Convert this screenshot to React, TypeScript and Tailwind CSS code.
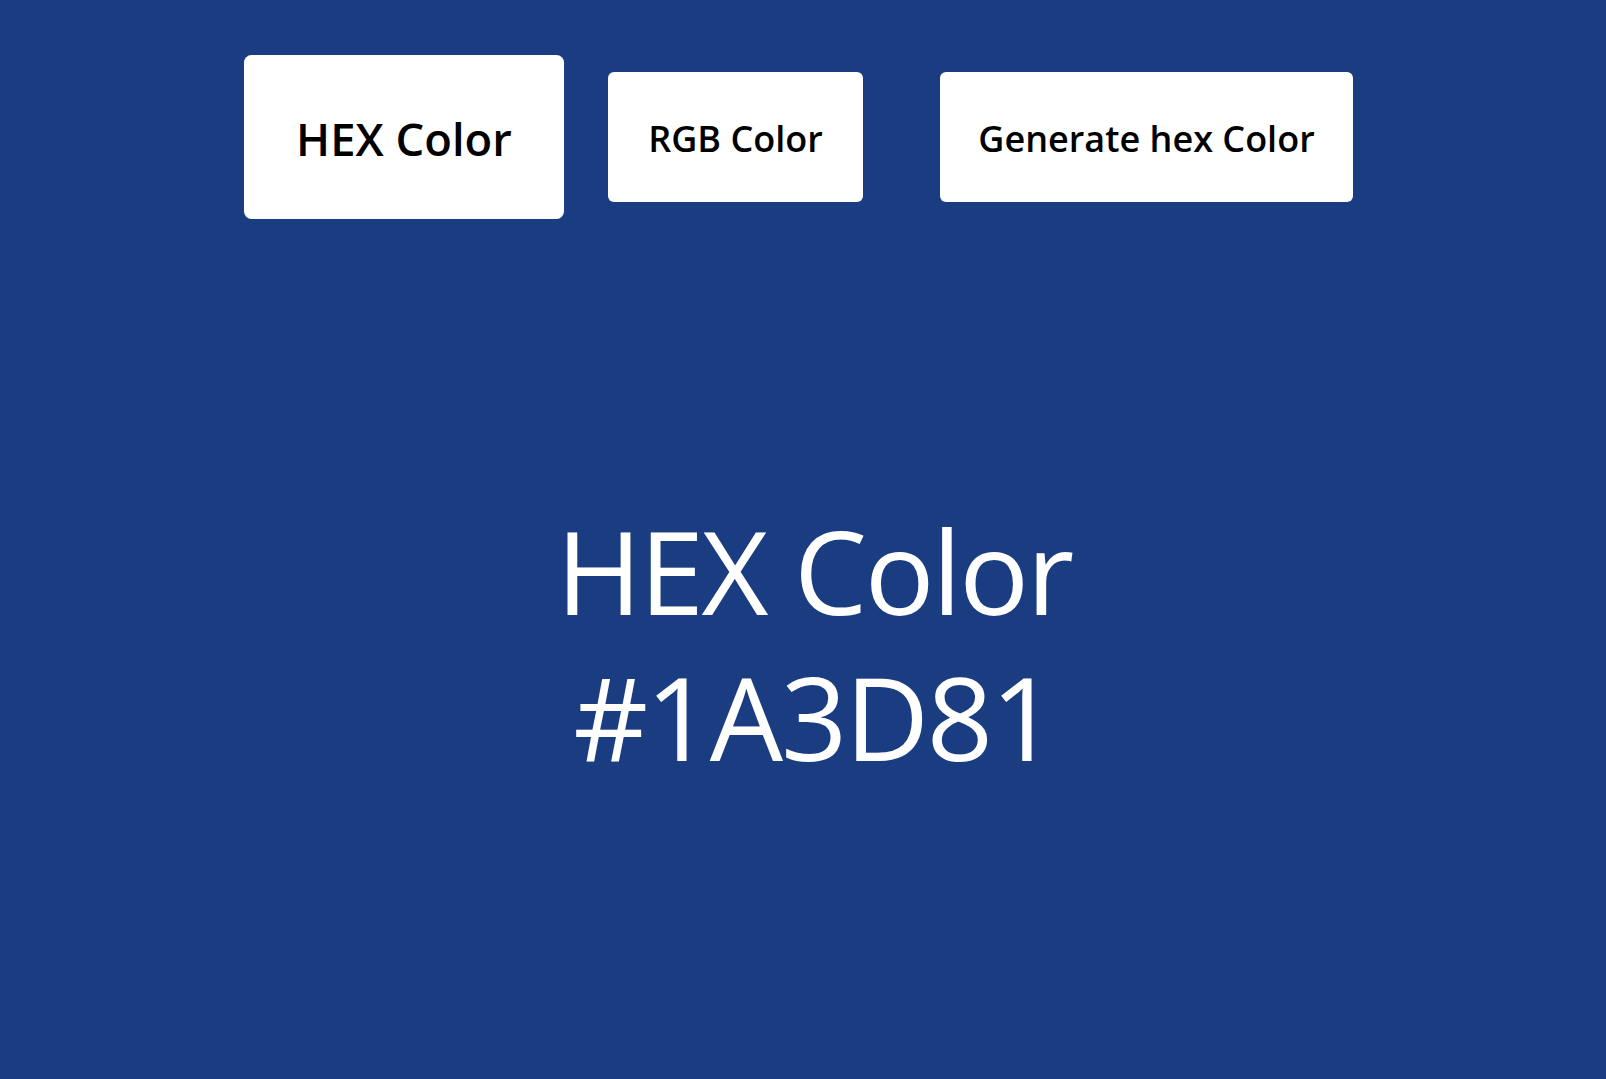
const buttons = [
  { label: "HEX Color", width: "w-[254px]", active: true },
  { label: "RGB Color", width: "w-[255px]", active: false },
  { label: "Generate hex Color", width: "w-[413px]", active: false },
];

export default function App() {
  return (
    <div
      className="min-h-screen bg-[#1a3d81] flex flex-col"
      style={{ fontFamily: '"Open Sans", "Noto Sans", sans-serif' }}
    >
      <div className="flex items-center gap-[77px] pl-[277px] pt-[72px]">
        {buttons.map((b) => (
          <button
            key={b.label}
            className={`${b.width} h-[130px] pt-[4px] bg-white text-black text-[36px] font-semibold rounded-md flex items-center justify-center whitespace-nowrap ${
              b.active ? "scale-[1.26]" : ""
            }`}
          >
            {b.label}
          </button>
        ))}
      </div>
      <div className="mt-[295px] pl-[22px] flex flex-col items-center text-white text-[116px] leading-[146px] tracking-[-0.02em]">
        <span>HEX Color</span>
        <span>#1A3D81</span>
      </div>
    </div>
  );
}
